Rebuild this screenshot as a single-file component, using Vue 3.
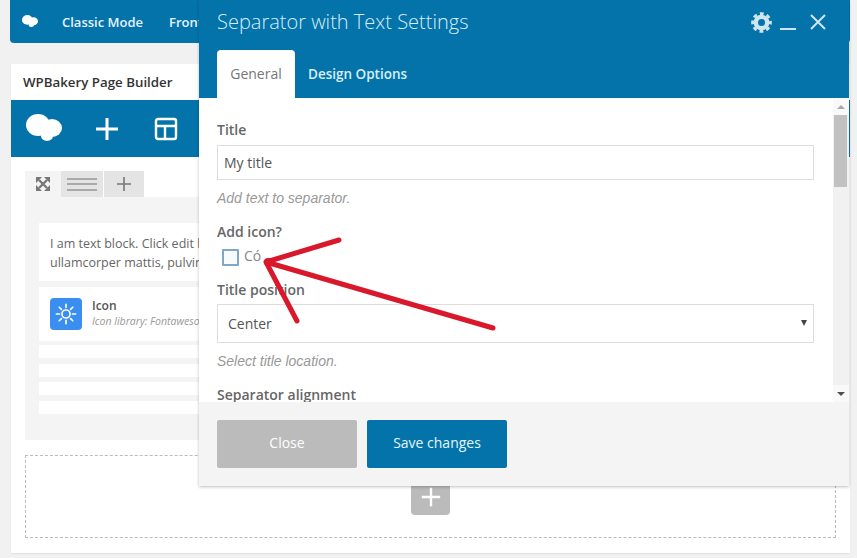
<script setup>
const bars = [1, 2, 3, 4]
</script>

<template>
  <div class="page">
    <header class="topbar">
      <svg class="logo-small" viewBox="0 0 36 27"><g fill="#fff"><ellipse cx="12" cy="11" rx="12" ry="11"/><ellipse cx="26" cy="14" rx="10" ry="9"/><ellipse cx="21" cy="22" rx="6" ry="5"/></g></svg>
      <span class="topbar-link first">Classic Mode</span>
      <span class="topbar-link">Frontend Editor</span>
    </header>

    <section class="card">
      <div class="card-title">WPBakery Page Builder</div>
      <div class="toolbar">
        <svg class="logo-large" viewBox="0 0 36 27"><g fill="#fff"><ellipse cx="12" cy="11" rx="12" ry="11"/><ellipse cx="26" cy="14" rx="10" ry="9"/><ellipse cx="21" cy="22" rx="6" ry="5"/></g></svg>
        <svg class="tool-plus" viewBox="0 0 24 24"><path d="M12 1v22M1 12h22" stroke="#fff" stroke-width="3" fill="none"/></svg>
        <svg class="tool-layout" viewBox="0 0 24 24"><rect x="2" y="2" width="20" height="20" rx="2" stroke="#fff" stroke-width="2.4" fill="none"/><path d="M2 9h20M11 9v13" stroke="#fff" stroke-width="2.4" fill="none"/></svg>
      </div>
      <div class="canvas">
        <div class="row-tabs">
          <div class="row-tab expand">
            <svg viewBox="0 0 14 14"><path d="M0 0h6L0 6zM14 0H8l6 6zM0 14h6l-6-6zM14 14H8l6-6z" fill="#777"/><path d="M3 3l8 8M11 3l-8 8" stroke="#777" stroke-width="2.400"/></svg>
          </div>
          <div class="row-tab lines"><i></i><i></i><i></i></div>
          <div class="row-tab add">
            <svg viewBox="0 0 14 14"><path d="M7 0v14M0 7h14" stroke="#777" stroke-width="1.6"/></svg>
          </div>
        </div>
        <div class="row-panel">
          <div class="block text-block">
            <p>I am text block. Click edit button to change this text. Lorem ipsum dolor sit amet, consectetur adipiscing elit. Ut elit tellus, luctus nec</p>
            <p>ullamcorper mattis, pulvinar dapibus leo.</p>
          </div>
          <div class="block icon-block">
            <div class="icon-tile">
              <svg viewBox="0 0 24 24">
                <circle cx="12" cy="12" r="4.4" fill="none" stroke="#fff" stroke-width="1.8"/>
                <path d="M12 1.5v3.5M12 19v3.5M1.5 12H5M19 12h3.5M4.6 4.6l2.4 2.4M17 17l2.4 2.4M4.6 19.4L7 17M17 7l2.4-2.4" stroke="#fff" stroke-width="1.8" stroke-linecap="round"/>
              </svg>
            </div>
            <div class="icon-text">
              <strong>Icon</strong>
              <em>Icon library: Fontawesome</em>
            </div>
          </div>
          <div v-for="b in bars" :key="b" class="bar"></div>
        </div>
        <div class="dropzone">
          <div class="drop-add">
            <svg viewBox="0 0 24 24"><path d="M12 2v20M2 12h20" stroke="#fff" stroke-width="2.600"/></svg>
          </div>
        </div>
      </div>
    </section>

    <div class="modal">
      <div class="modal-head">
        <div class="modal-title-row">
          <h2>Separator with Text Settings</h2>
          <div class="modal-actions">
            <svg class="gear" viewBox="0 0 24 24" fill="none" stroke="#cfe5f1">
              <circle cx="12" cy="12" r="6.500" stroke-width="5"/>
              <circle cx="12" cy="12" r="10.200" stroke-width="3.200" stroke-dasharray="4.400 3.610" stroke-dashoffset="2.200"/>
            </svg>
            <span class="minimize"></span>
            <svg class="close-x" viewBox="0 0 16 16"><path d="M1 1l14 14M15 1L1 15" stroke="#cfe5f1" stroke-width="2"/></svg>
          </div>
        </div>
        <div class="tabs">
          <span class="tab active">General</span>
          <span class="tab">Design Options</span>
        </div>
      </div>
      <div class="modal-body">
        <div class="form">
          <label class="lbl first-lbl">Title</label>
          <div class="input">My title</div>
          <p class="help">Add text to separator.</p>
          <label class="lbl icon-lbl">Add icon?</label>
          <div class="check-row"><span class="checkbox"></span><span class="check-text">Có</span></div>
          <label class="lbl pos-lbl">Title position</label>
          <div class="select">Center<span class="caret"></span></div>
          <p class="help">Select title location.</p>
          <label class="lbl align-lbl">Separator alignment</label>
        </div>
        <div class="scrollbar">
          <span class="cap"><span class="arrow up"></span></span>
          <span class="thumb"></span>
          <span class="track"></span>
          <span class="cap"><span class="arrow down"></span></span>
        </div>
      </div>
      <div class="modal-foot">
        <button class="btn close">Close</button>
        <button class="btn save">Save changes</button>
      </div>
    </div>

    <svg class="annotation" viewBox="0 0 857 558">
      <path d="M339 240L266 262L493 328M266 262L297 321" fill="none" stroke="#d9182c" stroke-width="5" stroke-linecap="round" stroke-linejoin="round"/>
      <circle cx="268" cy="262" r="4" fill="#d9182c"/>
    </svg>
  </div>
</template>

<style>
html, body { margin: 0; background: #f1f1f1; overflow: hidden; }
</style>

<style scoped>
.page {
  position: relative;
  width: 857px;
  height: 558px;
  overflow: hidden;
  background: #f1f1f1;
  padding: 0 7px 0 10px;
  box-sizing: border-box;
  font-family: "Open Sans", sans-serif;
  color: #444;
}
.topbar {
  height: 43px;
  background: #0473aa;
  border-radius: 0 0 4px 4px;
  display: flex;
  align-items: center;
  color: #e4f3fb;
  font-size: 13px;
  font-weight: 600;
  white-space: nowrap;
  overflow: hidden;
}
.logo-small { width: 16px; height: 12px; margin-left: 12px; margin-top: -2px; }
.topbar-link { margin-left: 26px; }
.topbar-link.first { margin-left: 24px; }
.card {
  margin: 21px 0 0 1px;
  height: 489px;
  background: #fff;
  box-shadow: 0 1px 1px rgba(0,0,0,.06);
}
.card-title {
  height: 36px;
  line-height: 37px;
  padding-left: 12px;
  font-size: 13.300px;
  font-weight: 600;
  color: #333;
}
.toolbar {
  height: 57px;
  background: #0473aa;
  display: flex;
  align-items: center;
}
.logo-large { width: 36px; height: 27px; margin-left: 15px; margin-top: -3px; }
.tool-plus { width: 24px; height: 24px; margin-left: 33px; }
.tool-layout { width: 24px; height: 24px; margin-left: 35px; }
.canvas { padding: 14px 14px 0; }
.row-tabs { display: flex; height: 26px; }
.row-tab { display: flex; align-items: center; justify-content: center; flex-direction: column; }
.expand { width: 36px; background: #f4f4f4; }
.expand svg { width: 14px; height: 14px; }
.lines { width: 42px; background: #e4e4e4; gap: 3.500px; }
.lines i { display: block; width: 30px; height: 2px; background: #aaa; }
.add { width: 40px; margin-left: 1px; background: #e4e4e4; }
.add svg { width: 14px; height: 14px; }
.row-panel {
  height: 243px;
  background: #f4f4f4;
  padding: 26px 14px 0;
  box-sizing: border-box;
}
.block { background: #fff; }
.text-block {
  height: 58px;
  padding: 11px 8px 0 11px;
  box-sizing: border-box;
  margin-bottom: 6px;
  font-size: 12.500px;
  line-height: 19px;
  color: #666;
  white-space: nowrap;
  overflow: hidden;
}
.text-block p { margin: 0; }
.icon-block {
  height: 54px;
  display: flex;
  align-items: center;
  padding-left: 11px;
  margin-bottom: 4px;
}
.icon-tile {
  width: 32px;
  height: 32px;
  background: #3a8ef0;
  border-radius: 4px;
  display: flex;
  align-items: center;
  justify-content: center;
}
.icon-tile svg { width: 22px; height: 22px; }
.icon-text { margin: -2px 0 0 10px; display: flex; flex-direction: column; }
.icon-text strong { font-size: 12px; font-weight: 600; line-height: 16px; color: #555; }
.icon-text em { font-size: 10.500px; line-height: 14px; color: #999; white-space: nowrap; }
.bar { height: 13px; background: #fff; margin-bottom: 5.500px; }
.dropzone {
  margin-top: 15px;
  height: 83px;
  border: 1px dashed #bbb;
  box-sizing: border-box;
  display: flex;
  justify-content: center;
}
.drop-add {
  margin-top: 22px;
  width: 39px;
  height: 37px;
  background: #bbb;
  border-radius: 4px;
  display: flex;
  align-items: center;
  justify-content: center;
}
.drop-add svg { width: 22px; height: 22px; }

.modal {
  position: absolute;
  left: 199px;
  top: 0;
  width: 650px;
  height: 486px;
  display: flex;
  flex-direction: column;
  box-shadow: 0 1px 3px rgba(0,0,0,.25);
}
.modal-head { height: 98px; background: #0473aa; display: flex; flex-direction: column; }
.modal-title-row {
  display: flex;
  justify-content: space-between;
  padding: 0 23px 0 18px;
  align-items: center;
  margin-top: -6px;
  flex: none;
  height: 56px;
}
.modal-title-row h2 { margin: -2px 0 0; font-size: 20px; font-weight: 300; color: #d6eef8; }
.modal-actions { display: flex; align-items: center; }
.gear { width: 21px; height: 21px; }
.minimize { width: 16px; height: 2px; background: #cfe5f1; margin: 14px 0 0 8px; }
.close-x { width: 16px; height: 16px; margin-left: 14px; }
.tabs { display: flex; padding-left: 18px; height: 48px; flex: none; }
.tab { font-size: 13.500px; font-weight: 600; color: #d6eef8; line-height: 48px; padding: 0 13px; }
.tab.active {
  width: 78px;
  box-sizing: border-box;
  padding: 0;
  text-align: center;
  background: #fff;
  color: #777;
  font-weight: 400;
  font-size: 14px;
  border-radius: 4px 4px 0 0;
}
.modal-body { height: 304px; background: #fff; display: flex; overflow: hidden; flex: none; }
.form { width: 634px; box-sizing: border-box; padding: 0 19px 0 18px; flex: none; }
.lbl { display: block; font-size: 14px; font-weight: 600; color: #666; line-height: 20px; }
.first-lbl { margin-top: 22px; }
.input {
  margin-top: 5px;
  height: 35px;
  line-height: 34px;
  padding-left: 6px;
  border: 1px solid #ddd;
  box-sizing: border-box;
  font-size: 14px;
  color: #555;
}
.help {
  margin: 9px 0 0;
  font-family: "Liberation Sans", sans-serif;
  font-style: italic;
  font-size: 14px;
  line-height: 18px;
  color: #999;
}
.icon-lbl { margin-top: 15px; }
.check-row {
  display: flex;
  align-items: center;
  margin: 6px 0 0 5px;
  height: 18px;
  font-size: 14px;
  color: #888;
  gap: 5px;
}
.check-text { margin-top: -3px; }
.checkbox {
  width: 17px;
  height: 17px;
  box-sizing: border-box;
  background: #f7fbfd;
  border: 2px solid #7fa8c4;
  border-radius: 1px;
}
.pos-lbl { margin-top: 14px; }
.select {
  position: relative;
  margin-top: 4px;
  height: 39px;
  line-height: 38px;
  padding-left: 10px;
  border: 1px solid #ddd;
  box-sizing: border-box;
  font-size: 14px;
  color: #555;
}
.caret {
  position: absolute;
  right: 6px;
  top: 15px;
  border-left: 3.500px solid transparent;
  border-right: 3.500px solid transparent;
  border-top: 6px solid #444;
}
.align-lbl { margin-top: 15px; }
.scrollbar {
  width: 16px;
  background: #f1f1f1;
  flex: none;
  display: flex;
  flex-direction: column;
}
.cap { height: 17px; flex: none; background: #f9f9f9; display: flex; align-items: center; justify-content: center; }
.thumb { width: 13px; height: 72px; margin-left: 1px; flex: none; background: #c1c1c1; }
.track { flex: 1; }
.arrow { width: 0; height: 0; border-left: 4px solid transparent; border-right: 4px solid transparent; }
.arrow.up { border-bottom: 4px solid #a8a8a8; }
.arrow.down { border-top: 4px solid #505050; }
.modal-foot {
  flex: 1;
  background: #f4f4f4;
  display: flex;
  gap: 10px;
  padding: 18px;
  box-sizing: border-box;
}
.btn {
  width: 140px;
  height: 48px;
  border: 0;
  border-radius: 2px;
  padding: 0 0 3px;
  font-family: "Open Sans", sans-serif;
  font-size: 14px;
  font-weight: 400;
  color: #fff;
}
.btn.close { background: #bbb; }
.btn.save { background: #0473aa; color: #e4f6fd; }
.annotation {
  position: absolute;
  left: 0;
  top: 0;
  width: 857px;
  height: 558px;
  pointer-events: none;
}
</style>
